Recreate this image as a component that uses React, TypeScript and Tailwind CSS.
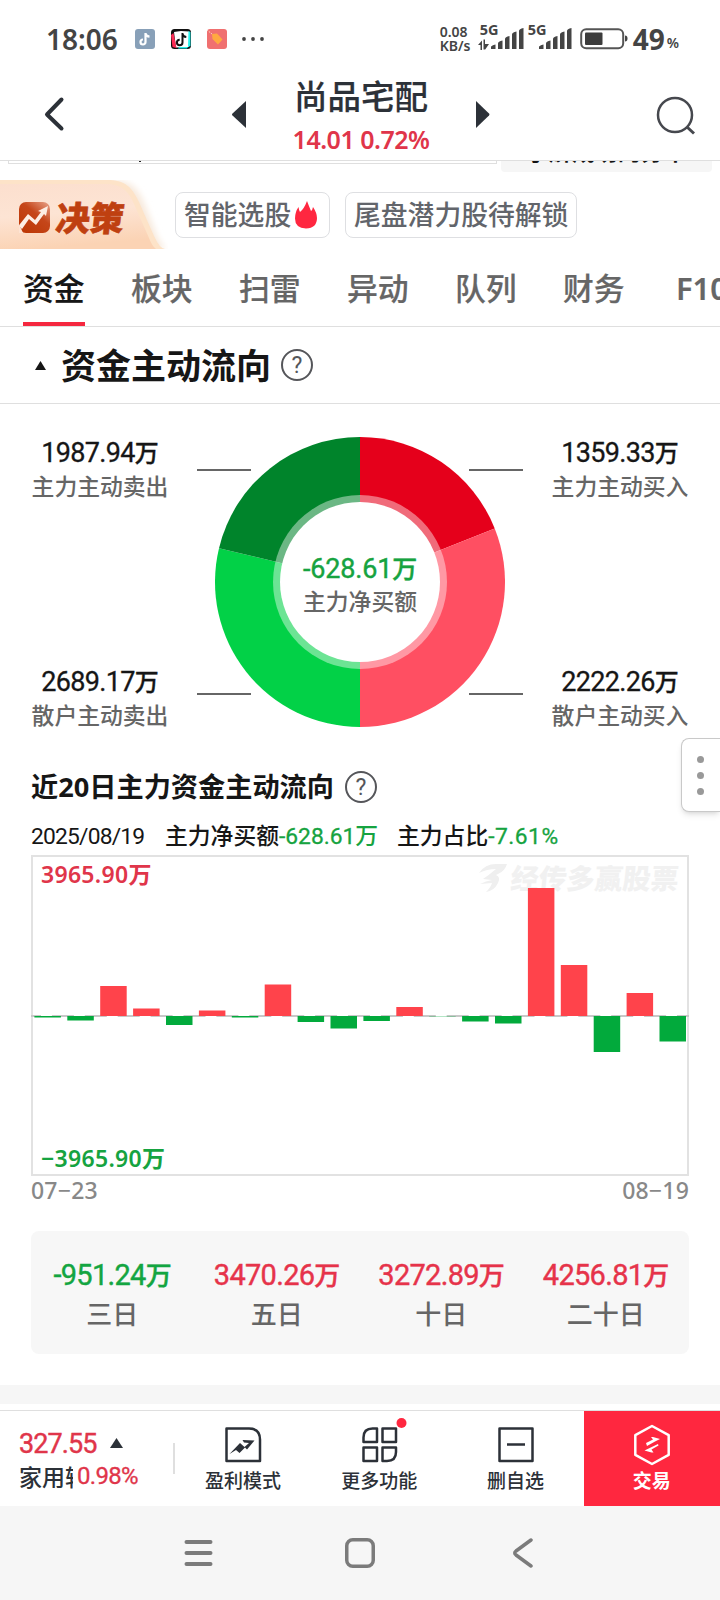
import type { ReactNode } from "react";
import clsx from "clsx";

const DIN = "font-['Roboto','Noto_Sans_CJK_SC',sans-serif]";
const MI = "font-['Noto_Sans','Noto_Sans_CJK_SC',sans-serif]";

const tabs = ["资金", "板块", "扫雷", "异动", "队列", "财务", "F10"];

// bar heights in px, positive is above the zero line
const flow = [
  -1.5, -4.5, 30, 7.5, -9, 5.5, -1.5, 31.5, -6, -12.5, -5, 9, -0.3, -5.5, -7.5, 128, 51, -36, 23, -25.5,
];

const periods = [
  { value: "-951.24", label: "三日", up: false },
  { value: "3470.26", label: "五日", up: true },
  { value: "3272.89", label: "十日", up: true },
  { value: "4256.81", label: "二十日", up: true },
];

function slice(from: number, to: number) {
  const p = (deg: number) => {
    const a = (deg * Math.PI) / 180;
    return `${145 + 145 * Math.sin(a)} ${145 - 145 * Math.cos(a)}`;
  };
  return `M145 145L${p(from)}A145 145 0 0 1 ${p(to)}Z`;
}

function Signal({ arrows }: { arrows?: boolean }) {
  return (
    <svg width="47" height="26" viewBox="0 0 47 26" fill="#444">
      {arrows && <path d="M0 19l4-4.5V24H2.500v-5zM5.500 13.600h1.500V18H11l-3.800 5.600H5.500z" />}
      <path d="M13 23v-2q0-1.500 4.500-2.500V23zM20 23v-5.500q0-2 4.500-3V23zM27 23V13q0-2 4.500-3V23zM34 23V8.500q0-2 4.500-3V23zM41 23V5q0-2 4.500-3V23z" />
    </svg>
  );
}

function StatusBar() {
  return (
    <div className="flex h-[78px] items-center pl-[46px] pr-[41px] text-[#444]">
      <span className={clsx(MI, "w-[72px] text-[28px] font-semibold leading-none")}>18:06</span>
      <svg className="ml-[17px]" width="20" height="20" viewBox="0 0 20 20">
        <rect width="20" height="20" rx="3" fill="#88a0b8" />
        <path d="M10.500 4v9a2.500 2.500 0 1 1-2.500-2.500M10.500 4.500c.4 2 1.800 3 4 3.200" fill="none" stroke="#fff" strokeWidth="2.200" />
      </svg>
      <svg className="ml-4" width="20" height="20" viewBox="0 0 20 20">
        <rect width="20" height="20" rx="3.500" fill="#111" />
        <path d="M3 3l7-1 8 .5L18 18l-13 .5z" fill="#fff" />
        <path d="M0 6l2.500-2 3 15-4-1z" fill="#fe2c55" />
        <path d="M17.500 2l2 1v14L17 18zM8 18h9l-1 1.500H7z" fill="#25f4ee" />
        <path d="M11.500 4v9.500a2.800 2.800 0 1 1-2.800-2.800M11.500 5c.4 1.800 1.700 2.800 3.800 3" fill="none" stroke="#111" strokeWidth="2" />
      </svg>
      <svg className="ml-4" width="20" height="20" viewBox="0 0 20 20">
        <rect width="20" height="20" rx="3" fill="#f07070" />
        <path d="M5 5l5-.5 5.500 6-4.500 5L5.500 10z" fill="#ffa940" />
        <path d="M0 1l5 4" stroke="#fbd0c0" strokeDasharray="1.500 1" />
      </svg>
      <svg className="ml-[15px]" width="22" height="4" viewBox="0 0 22 4" fill="#444">
        <circle cx="2" cy="2" r="1.900" />
        <circle cx="11" cy="2" r="1.900" />
        <circle cx="20" cy="2" r="1.900" />
      </svg>
      <div className={clsx(MI, "ml-auto w-[38px] text-[14px] font-semibold leading-[14px]")}>
        <div>0.08</div>
        <div>KB/s</div>
      </div>
      <div className="relative w-[48px]">
        <span className={clsx(MI, "absolute -top-1 left-[2px] text-[14.500px] font-bold leading-none")}>5G</span>
        <Signal arrows />
      </div>
      <div className="relative w-[54px]">
        <span className={clsx(MI, "absolute -top-1 left-[2px] text-[14.500px] font-bold leading-none")}>5G</span>
        <Signal />
      </div>
      <svg width="48" height="22" viewBox="0 0 48 22">
        <rect x="1.200" y="1.200" width="42" height="19" rx="5" fill="none" stroke="#555" strokeWidth="2" />
        <rect x="5" y="4.500" width="17.500" height="12.500" rx="1" fill="#3c3c3c" />
        <path d="M45 7.500q2.500 0 2.500 3t-2.500 3z" fill="#444" />
      </svg>
      <span className={clsx(MI, "ml-[5px] text-[28px] font-bold leading-none")}>49</span>
      <span className={clsx(MI, "mt-2 ml-0.5 text-[14px] font-semibold leading-none")}>%</span>
    </div>
  );
}

function Header() {
  return (
    <header className="flex h-[83px] items-start justify-between border-b border-[#dfdfdf] bg-white pl-[43px] pr-6 text-[#2c3138]">
      <svg className="mt-[18px]" width="23" height="36" viewBox="0 0 23 36">
        <path d="M18.500 3.500L4 18.500l14.500 14" fill="none" stroke="#2c3138" strokeWidth="4" strokeLinecap="round" strokeLinejoin="round" />
      </svg>
      <div className="flex items-start">
        <svg className="mt-[23px]" width="14" height="27" viewBox="0 0 14 27">
          <path d="M14 0v27L0.500 14.500q-1-1 0-2z" fill="#2c3138" />
        </svg>
        <div className="flex w-[230px] flex-col items-center">
          <h1 className={clsx(MI, "-mt-px text-[33.500px] font-medium leading-[38px] [-webkit-text-stroke:0.2px]")}>尚品宅配</h1>
          <p className={clsx(MI, "mt-[6px] text-[25px] font-semibold leading-[36px] tracking-[-0.5px] text-[#e0354a]")}>
            14.01 0.72%
          </p>
        </div>
        <svg className="mt-[23px]" width="14" height="27" viewBox="0 0 14 27">
          <path d="M0 0v27l13-12.500q1-1 0-2z" fill="#2c3138" />
        </svg>
      </div>
      <svg className="mt-[18px]" width="40" height="40" viewBox="0 0 40 40" fill="none" stroke="#46484e" strokeWidth="2.500">
        <circle cx="19" cy="19" r="17" />
        <path d="M31 31l7 6.500" strokeWidth="3" />
      </svg>
    </header>
  );
}

function ScrolledOff() {
  return (
    <div className="flex h-[11px] items-start">
      <div className="ml-2 h-[3px] w-[489px] overflow-hidden border border-t-0 border-[#dfdfdf]">
        <div className="ml-[130px] h-px w-[2px] bg-[#222]" />
      </div>
      <div className="ml-[4px] h-[11px] w-[211px] rounded-b-[4px] bg-[#f6f6f6]">
        <div className="h-[2px] overflow-hidden">
          <p className={clsx(MI, "-mt-[21px] text-center text-[23px] font-bold leading-[23px] text-[#111]")}>
            享解成功的分中
          </p>
        </div>
      </div>
    </div>
  );
}

function Promo() {
  return (
    <div className="flex h-[78px] items-start">
      <div className="relative mt-2 h-[69px] w-[168px]">
        <svg className="absolute inset-0" width="168" height="69" viewBox="0 0 168 69">
          <defs>
            <linearGradient id="badge" x1="0" y1="0" x2="0.200" y2="1">
              <stop offset="0" stopColor="#fcdfce" />
              <stop offset="0.500" stopColor="#fde4d4" />
              <stop offset="1" stopColor="#fbd3b4" />
            </linearGradient>
            <filter id="soft" x="-10%" y="-10%" width="120%" height="120%">
              <feGaussianBlur stdDeviation="3" />
            </filter>
          </defs>
          <path d="M0 0h112c20 0 27 10 33 25l12 31q6 13 11 13H0z" fill="#f7e9dc" filter="url(#soft)" />
          <path d="M0 0h107c18 0 25 7 32 22l15 34q6 13 11 13H0z" fill="#fde3c8" />
          <path d="M0 4h106c15 0 22 6 28 20l15 34q3 8 7 11H0z" fill="url(#badge)" />
        </svg>
        <div className="relative flex h-full items-center pt-[6px] pl-[19px]">
          <svg width="31" height="31" viewBox="0 0 31 31">
            <defs>
              <linearGradient id="logo" x1="1" y1="0" x2="0.200" y2="1">
                <stop offset="0" stopColor="#e9a58c" />
                <stop offset="0.450" stopColor="#c5461a" />
                <stop offset="1" stopColor="#bd3806" />
              </linearGradient>
            </defs>
            <rect width="31" height="31" rx="7" fill="url(#logo)" />
            <path d="M0 24l3 3 7-10 7 6 8-11 2 2 2-10-10 5 3 1-6 8-7-6L1 22z" fill="#fdeee4" />
            <path d="M0 22l4 9H0z" fill="#fde4d4" />
          </svg>
          <span className={clsx(MI, "ml-[6px] inline-block -skew-x-6 text-[34px] font-black leading-none text-[#bf4010] [-webkit-text-stroke:0.6px_#bf4010]")}>
            决策
          </span>
        </div>
      </div>
      <Chip className="ml-[7px] w-[155px]">
        智能选股
        <svg className="ml-[3px]" width="24" height="28" viewBox="0 0 24 28">
          <path d="M13 0q1.500 4 4 10 1.500-1 2-4Q23 12 23 17q0 10-11 10.500Q1 27 1 17.500 1 11 4.500 6q.5 3.500 1.500 5Q10 8 13 0z" fill="#ff2740" />
        </svg>
      </Chip>
      <Chip className="ml-[15px] w-[232px]">尾盘潜力股待解锁</Chip>
    </div>
  );
}

function Chip({ className, children }: { className: string; children: ReactNode }) {
  return (
    <div className={clsx(MI, className, "mt-[20px] flex h-[46px] items-center whitespace-nowrap rounded-[8px] border border-[#dedfe2] pl-[8px] text-[26.800px] font-medium leading-none text-[#62656b]")}>
      {children}
    </div>
  );
}

function Tabs() {
  return (
    <nav className="flex h-[77px] gap-[46px] overflow-hidden border-b border-[#dfdfdf] pl-[23px]">
      {tabs.map((tab, i) => (
        <div
          key={tab}
          className={clsx(
            MI,
            "w-[62px] shrink-0 border-b-4 pt-[17px] text-[30.800px] font-medium leading-[42px] [-webkit-text-stroke:0.2px] last:pl-[5px] last:font-semibold",
            i === 0 ? "border-[#f5273f] text-[#161616]" : "border-transparent text-[#666]"
          )}
        >
          {tab}
        </div>
      ))}
    </nav>
  );
}

function Help() {
  return (
    <span className="flex size-[32px] items-center justify-center rounded-full border-2 border-[#55565a] font-['Roboto',sans-serif] text-[23px] leading-none text-[#55565a]">
      ?
    </span>
  );
}

function Amount({ value, label }: { value: string; label: string }) {
  return (
    <div className={clsx(DIN, "flex w-[138px] flex-col items-center whitespace-nowrap")}>
      <span className="text-[27px] leading-[33px] tracking-[-0.7px] text-[#161616] [-webkit-text-stroke:0.3px]">
        {value}
        <span className="text-[24px] font-medium tracking-normal">万</span>
      </span>
      <span className="text-[22.800px] font-medium leading-[33px] text-[#666]">{label}</span>
    </div>
  );
}

function Leaders({ className }: { className: string }) {
  return (
    <div className={clsx(className, "mt-[32px] flex h-[226px] w-[54px] flex-col justify-between")}>
      <div className="h-[2px] bg-[#666]" />
      <div className="h-[2px] bg-[#666]" />
    </div>
  );
}

function Donut() {
  return (
    <section className="flex px-[31px] pt-[33px]">
      <div className="flex h-[296px] flex-col justify-between">
        <Amount value="1987.94" label="主力主动卖出" />
        <Amount value="2689.17" label="散户主动卖出" />
      </div>
      <Leaders className="ml-[28px] -mr-[36px]" />
      <div className="relative size-[290px]">
        <svg width="290" height="290" viewBox="0 0 290 290">
          <path d={slice(0, 68.3)} fill="#e5001b" />
          <path d={slice(68.3, 180)} fill="#ff4f62" />
          <path d={slice(180, 283.5)} fill="#02d147" />
          <path d={slice(283.5, 360)} fill="#00842b" />
          <circle cx="145" cy="145" r="87" fill="#fff" fillOpacity="0.42" />
          <circle cx="145" cy="145" r="80" fill="#fff" />
        </svg>
        <div className={clsx(DIN, "absolute inset-0 flex flex-col items-center pt-[116px]")}>
          <span className="text-[27px] leading-[33px] tracking-[-0.2px] text-[#16a340] [-webkit-text-stroke:0.4px]">
            -628.61<span className="text-[25px] font-medium">万</span>
          </span>
          <span className="text-[22.800px] font-medium leading-[34px] text-[#666]">主力净买额</span>
        </div>
      </div>
      <Leaders className="-ml-[36px] mr-[28px]" />
      <div className="flex h-[296px] flex-col justify-between">
        <Amount value="1359.33" label="主力主动买入" />
        <Amount value="2222.26" label="散户主动买入" />
      </div>
    </section>
  );
}

function FlowChart() {
  return (
    <section className="px-[31px] pt-[36px]">
      <div className="flex h-[36px] items-center">
        <h2 className={clsx(MI, "w-[314px] whitespace-nowrap text-[27.200px] font-bold leading-none text-[#161616]")}>
          近20日主力资金主动流向
        </h2>
        <Help />
      </div>
      <div className={clsx(DIN, "mt-4 flex h-[33px] items-center whitespace-nowrap text-[22.800px] leading-none text-[#161616]")}>
        <span className="w-[134px] tracking-[-0.800px]">2025/08/19</span>
        <span className="w-[232px] font-medium">
          主力净买额<span className="text-[#16a340]"><span className="font-normal [-webkit-text-stroke:0.3px]">-628.61</span>万</span>
        </span>
        <span className="font-medium">
          主力占比<span className="font-normal tracking-[0.500px] text-[#16a340] [-webkit-text-stroke:0.3px]">-7.61%</span>
        </span>
      </div>
      <div className={clsx(MI, "relative mt-px flex h-[321px] flex-col justify-between border-2 border-[#e2e2e2] px-2 text-[23px] font-semibold leading-[32px]")}>
        <div className="flex items-start justify-between">
          <span className="pt-px tracking-[0.300px] text-[#e0354a]">3965.90万</span>
          <span className="flex items-center pt-[5px] text-[28px] font-black text-[#f1f1f1]">
            <svg className="mr-1" width="29" height="28" viewBox="0 0 29 28" fill="#efefef">
              <path d="M1 9Q7 0 18 0h11q-2 7-9 10l-2 1q5 2 2 8-4 8-12 9 5-5 6-9l-12 1q6-3 12-4l-9-1q6-4 13-10Q9 5 1 9z" />
            </svg>
            <span className="-skew-x-6">经传多赢股票</span>
          </span>
        </div>
        <span className="tracking-[0.300px] text-[#16a340]">−3965.90万</span>
        <svg className="absolute -left-[2px] -top-[2px]" width="658" height="321" viewBox="0 0 658 321">
          <path d="M0 161H658" stroke="#c8c8c8" strokeWidth="2" strokeDasharray="22 10.900" strokeDashoffset="12" />
          {flow.map((h, i) => (
            <rect
              key={i}
              x={3.4 + i * 32.9}
              y={h > 0 ? 161 - h : 161}
              width="26.500"
              height={Math.abs(h)}
              fill={h > 0 ? "#ff434b" : "#02aa3c"}
            />
          ))}
        </svg>
      </div>
      <div className={clsx(MI, "flex justify-between text-[23px] font-medium leading-[29px] tracking-[0.200px] text-[#888]")}>
        <span>07−23</span>
        <span>08−19</span>
      </div>
    </section>
  );
}

function Periods() {
  return (
    <section className="mx-[31px] mt-[26px] grid h-[123px] grid-cols-4 rounded-[8px] bg-[#f7f7f7]">
      {periods.map((p) => (
        <div key={p.label} className={clsx(DIN, "flex flex-col items-center whitespace-nowrap pr-[2px] pt-[24px]")}>
          <span className={clsx("text-[29px] leading-[40px] tracking-[-0.700px] [-webkit-text-stroke:0.4px]", p.up ? "text-[#e6334a]" : "text-[#13a541]")}>
            {p.value}
            <span className="text-[26px] font-medium">万</span>
          </span>
          <span className="text-[26px] font-medium leading-[38px] text-[#666]">{p.label}</span>
        </div>
      ))}
    </section>
  );
}

function BarItem({ label, red, children }: { label: string; red?: boolean; children: ReactNode }) {
  return (
    <div
      className={clsx(
        MI,
        "flex w-[136.500px] flex-col items-center pt-[14px] text-[19px] font-medium leading-[26px]",
        red ? "bg-[#ff273f] font-semibold text-white" : "text-[#2c3138]"
      )}
    >
      <svg className="mb-[3px] overflow-visible" width="40" height="40" viewBox="0 0 40 40" fill="none" stroke="currentColor" strokeWidth="2.500" strokeLinejoin="round">
        {children}
      </svg>
      {label}
    </div>
  );
}

function BottomBar() {
  return (
    <div className="flex h-[96px] border-t border-[#dfdfdf] bg-white">
      <div className="flex w-[175px] items-center justify-between pl-[19px]">
        <div className={clsx(DIN, "pt-[2px]")}>
          <div className="flex h-[35px] items-center text-[27px] leading-none tracking-[-0.900px] text-[#e0354a]">
            <span className="w-[91px] pt-[2px] [-webkit-text-stroke:0.4px]">327.55</span>
            <svg width="13" height="10" viewBox="0 0 13 10">
              <path d="M6.500 0L13 10H0z" fill="#2c3138" />
            </svg>
          </div>
          <div className="flex h-[33px] items-center whitespace-nowrap leading-none">
            <span className="w-[54px] overflow-hidden pb-[3px] pt-[6px] text-[23px] font-medium text-[#2c3138]">家用轻工</span>
            <span className="mb-[3px] ml-[4px] text-[24px] tracking-[-0.700px] text-[#e0354a] [-webkit-text-stroke:0.3px]">0.98%</span>
          </div>
        </div>
        <div className="h-[31px] w-[2px] bg-[#dfdfdf]" />
      </div>
      <BarItem label="盈利模式">
        <path d="M3.500 3.500h22.500q11 0 11 11v21.500h-33.500z" />
        <path d="M6.500 29L17 18l4.500 4L26 18l-5-.5-1.500-2.500 12 .5-7.500 9-2-2-5.500 5.500-3.500-3z" fill="currentColor" stroke="none" />
      </BarItem>
      <BarItem label="更多功能">
        <path d="M4.500 17V12.500q0-9 9-9h4.500V17zM23.500 3.500h13.500V17h-13.500zM4.500 22.500h13.500V36H4.500zM23.500 22.500h13.500V27q0 9-9 9h-4.500z" />
        <circle cx="42.500" cy="-2" r="5" fill="#ff273f" stroke="none" />
      </BarItem>
      <BarItem label="删自选">
        <path d="M3.500 3.500h33V36h-33zM11 19.500h18" />
      </BarItem>
      <BarItem label="交易" red>
        <path d="M20 1l16.700 9.200v19.600L20 39 3.300 29.800V10.200z" />
        <path d="M14 18l7-3.500-2-2.500h2l7 2-5 2.500L15 21zM26.500 20.500l-7 4 2 3h-2l-7-2L26 19z" fill="currentColor" stroke="none" />
      </BarItem>
    </div>
  );
}

export default function App() {
  return (
    <div className="relative flex h-[1600px] w-[720px] flex-col overflow-hidden bg-white">
      <StatusBar />
      <Header />
      <ScrolledOff />
      <Promo />
      <Tabs />
      <div className="flex h-[77px] items-center border-b border-[#dfdfdf] pl-[35px]">
        <svg width="11" height="9" viewBox="0 0 11 9">
          <path d="M5.500 0L11 9H0z" fill="#161616" />
        </svg>
        <h2 className={clsx(MI, "ml-[15px] mr-[10px] pt-px text-[35px] font-bold leading-none text-[#161616]")}>资金主动流向</h2>
        <Help />
      </div>
      <Donut />
      <FlowChart />
      <Periods />
      <div className="mt-[31px] h-[19px] bg-[#f6f6f6]" />
      <div className="h-[6px]" />
      <BottomBar />
      <div className="flex flex-1 items-center justify-center gap-[132px] bg-[#f6f6f6]">
        <svg width="29" height="30" viewBox="0 0 29 30" stroke="#7b7b7b" strokeWidth="4" strokeLinecap="round">
          <path d="M2.500 4h24M2.500 15h24M2.500 26h24" />
        </svg>
        <svg width="30" height="30" viewBox="0 0 30 30" fill="none" stroke="#7b7b7b" strokeWidth="3.500">
          <rect x="1.750" y="1.750" width="26.500" height="26.500" rx="6" />
        </svg>
        <svg width="29" height="30" viewBox="0 0 29 30" fill="none" stroke="#7b7b7b" strokeWidth="3.500" strokeLinecap="round" strokeLinejoin="round">
          <path d="M24 2L9 13q-2.500 2 0 4l15 11" />
        </svg>
      </div>
      <div className="absolute right-0 top-[738px] flex h-[74px] w-[39px] flex-col items-center justify-center gap-[9px] rounded-l-[8px] border border-r-0 border-[#c9c9c9] bg-white pr-px shadow-md">
        <div className="size-[7px] rounded-full bg-[#999]" />
        <div className="size-[7px] rounded-full bg-[#999]" />
        <div className="size-[7px] rounded-full bg-[#999]" />
      </div>
    </div>
  );
}
